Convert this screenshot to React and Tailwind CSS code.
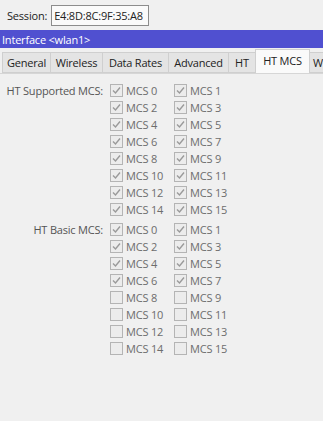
import React from "react";

const Check = ({ checked }) => (
  <div className="w-[13px] h-[13px] border border-[#b4b4b4] bg-[#ececec] flex items-center justify-center shrink-0">
    {checked && (
      <svg width="9" height="9" viewBox="0 0 9 9">
        <path d="M1 4.5 L3.5 7 L8 1.5" fill="none" stroke="#9a9a9a" strokeWidth="1.4" />
      </svg>
    )}
  </div>
);

const Row = ({ label, a, b, ca, cb }) => (
  <div className="flex items-center h-[17px]">
    <div className="w-[103px] text-right text-[#555555] whitespace-nowrap">{label}</div>
    <div className="ml-[7px] w-[64px] flex items-center">
      <Check checked={ca} />
      <span className="ml-[3px] text-[#6d6d6d] whitespace-nowrap">{a}</span>
    </div>
    <div className="flex items-center">
      <Check checked={cb} />
      <span className="ml-[3px] text-[#6d6d6d] whitespace-nowrap">{b}</span>
    </div>
  </div>
);

const tabs = [
  ["General", 48],
  ["Wireless", 52],
  ["Data Rates", 66],
  ["Advanced", 60],
  ["HT", 27],
];

export default function App() {
  const supported = [0, 1, 2, 3, 4, 5, 6, 7];
  const basic = [true, true, true, true, false, false, false, false];
  return (
    <div
      className="w-[323px] h-[421px] bg-[#f0f0f0] overflow-hidden text-[11px] leading-none text-[#222] tracking-[-0.2px]"
      style={{ fontFamily: '"Segoe UI", "Open Sans", sans-serif' }}
    >
      <div className="h-[30px] flex items-center pl-[7px]">
        <span className="text-[#222]">Session:</span>
        <div className="ml-[4px] w-[98px] h-[21px] border border-[#8c8c8c] bg-[#fafafa] flex items-center pl-[2px]">
          E4:8D:8C:9F:35:A8
        </div>
      </div>
      <div className="h-[18px] bg-[#5050d0] text-white flex items-center pl-[2px]">
        Interface &lt;wlan1&gt;
      </div>
      <div className="h-[24px] mt-[2px] flex items-end pl-[2px] border-b border-[#d6d6d6]">
        {tabs.map(([t, w]) => (
          <div
            key={t}
            className="h-[21px] bg-[#e4e4e4] border border-[#cfcfcf] border-r-0 flex items-center justify-center shrink-0 text-[#222]"
            style={{ width: w }}
          >
            {t}
          </div>
        ))}
        <div className="w-[55px] h-[24px] bg-[#fafafa] border border-[#cfcfcf] border-b-0 flex items-center justify-center shrink-0 text-[#222] pb-[2px]">
          HT MCS
        </div>
        <div className="w-[20px] h-[21px] bg-[#e4e4e4] border border-[#cfcfcf] border-l-0 flex items-center pl-[3px] shrink-0 text-[#222]">
          W
        </div>
      </div>
      <div className="pt-[8px]">
        {supported.map((i) => (
          <Row
            key={"s" + i}
            label={i === 0 ? "HT Supported MCS:" : ""}
            a={`MCS ${i * 2}`}
            b={`MCS ${i * 2 + 1}`}
            ca
            cb
          />
        ))}
        <div className="h-[3px]" />
        {basic.map((c, i) => (
          <Row
            key={"b" + i}
            label={i === 0 ? "HT Basic MCS:" : ""}
            a={`MCS ${i * 2}`}
            b={`MCS ${i * 2 + 1}`}
            ca={c}
            cb={c}
          />
        ))}
      </div>
    </div>
  );
}
